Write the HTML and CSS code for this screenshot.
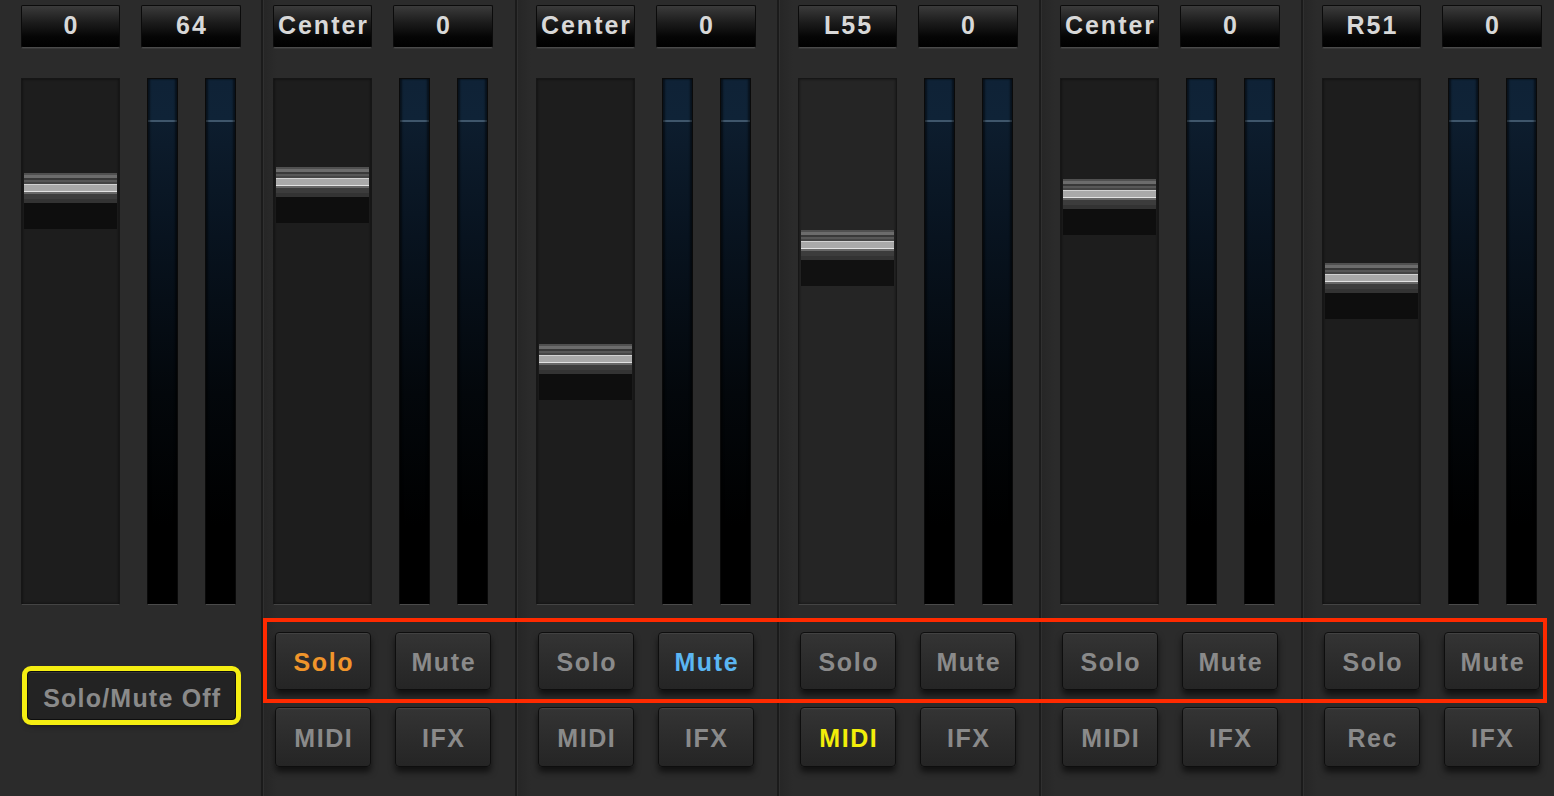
FILE: index.html
```html
<!DOCTYPE html>
<html>
<head>
<meta charset="utf-8">
<link rel="stylesheet" href="styles.css">
</head>
<body>
<div class="mixer">
  <div class="strip strip--master">
    <div class="grid values"><div class="val">0</div><div class="val">64</div></div>
    <div class="grid faders">
      <div class="track"><div class="cap" style="top:94px"></div></div>
      <div class="meters"><div class="meter"></div><div class="meter"></div></div>
    </div>
    <div class="master-bottom"><div class="btn btn--wide annot-yellow">Solo/Mute Off</div></div>
  </div>

  <div class="strip strip--second">
    <div class="grid values"><div class="val">Center</div><div class="val">0</div></div>
    <div class="grid faders">
      <div class="track"><div class="cap" style="top:88px"></div></div>
      <div class="meters"><div class="meter"></div><div class="meter"></div></div>
    </div>
    <div class="grid buttons">
      <div class="btn btn--solo-on">Solo</div><div class="btn">Mute</div>
      <div class="btn">MIDI</div><div class="btn">IFX</div>
    </div>
  </div>

  <div class="strip">
    <div class="grid values"><div class="val">Center</div><div class="val">0</div></div>
    <div class="grid faders">
      <div class="track"><div class="cap" style="top:265px"></div></div>
      <div class="meters"><div class="meter"></div><div class="meter"></div></div>
    </div>
    <div class="grid buttons">
      <div class="btn">Solo</div><div class="btn btn--mute-on">Mute</div>
      <div class="btn">MIDI</div><div class="btn">IFX</div>
    </div>
  </div>

  <div class="strip">
    <div class="grid values"><div class="val">L55</div><div class="val">0</div></div>
    <div class="grid faders">
      <div class="track track--selected"><div class="cap" style="top:151px"></div></div>
      <div class="meters"><div class="meter"></div><div class="meter"></div></div>
    </div>
    <div class="grid buttons">
      <div class="btn">Solo</div><div class="btn">Mute</div>
      <div class="btn btn--midi-on">MIDI</div><div class="btn">IFX</div>
    </div>
  </div>

  <div class="strip">
    <div class="grid values"><div class="val">Center</div><div class="val">0</div></div>
    <div class="grid faders">
      <div class="track"><div class="cap" style="top:100px"></div></div>
      <div class="meters"><div class="meter"></div><div class="meter"></div></div>
    </div>
    <div class="grid buttons">
      <div class="btn">Solo</div><div class="btn">Mute</div>
      <div class="btn">MIDI</div><div class="btn">IFX</div>
    </div>
  </div>

  <div class="strip strip--last">
    <div class="grid values"><div class="val">R51</div><div class="val">0</div></div>
    <div class="grid faders">
      <div class="track"><div class="cap" style="top:184px"></div></div>
      <div class="meters"><div class="meter"></div><div class="meter"></div></div>
    </div>
    <div class="grid buttons">
      <div class="btn">Solo</div><div class="btn">Mute</div>
      <div class="btn">Rec</div><div class="btn">IFX</div>
    </div>
  </div>

  <div class="annot-red"></div>
</div>
</body>
</html>
```

FILE: styles.css
```css
* { box-sizing: border-box; }
html, body {
  margin: 0;
  padding: 0;
  width: 1554px;
  height: 796px;
  overflow: hidden;
  background: #2a2a2a;
  font-family: "Liberation Sans", Arial, sans-serif;
}
.mixer {
  position: relative;
  display: flex;
  width: 1554px;
  height: 796px;
  background: #2a2a2a;
}
.strip {
  flex: none;
  width: 262px;
  height: 796px;
  padding-left: 19px;
  border-left: 2px solid #1b1b1b;
  box-shadow: inset 1px 0 0 #303030;
  background: linear-gradient(to right, #262626 0, #2b2b2b 14px, #2b2b2b 100%);
  display: flex;
  flex-direction: column;
}
.strip--master {
  width: 261px;
  padding-left: 21px;
  border-left: none;
  box-shadow: none;
  background: #2b2b2b;
}
.strip--second {
  width: 254px;
  padding-left: 10px;
}
.strip--last {
  flex: 1;
}
.grid {
  display: grid;
  grid-template-columns: 100px 100px;
  column-gap: 20px;
}
.values {
  margin-top: 5px;
  height: 43px;
}
.val {
  height: 43px;
  border: 1px solid #0b0b0b;
  border-bottom-color: #4a4a4a;
  border-radius: 2px;
  background: linear-gradient(to bottom, #3b3b3b 0%, #1c1c1c 40%, #050505 75%, #000 100%);
  box-shadow: 0 1px 0 rgba(255,255,255,0.06);
  color: #d8d8d8;
  font-weight: bold;
  font-size: 25px;
  letter-spacing: 2px;
  text-indent: 2px;
  display: flex;
  align-items: center;
  justify-content: center;
  padding-bottom: 3px;
}
.values .val:first-child { margin-right: 1px; }
.faders {
  margin-top: 30px;
  height: 527px;
}
.track {
  position: relative;
  width: 99px;
  height: 527px;
  background: #1d1d1d;
  border: 1px solid #161616;
  border-bottom-color: #444;
  box-shadow: inset 0 0 3px rgba(0,0,0,0.6);
}
.track--selected {
  background: #252525;
}
.cap {
  position: absolute;
  left: 2px;
  right: 2px;
  height: 30px;
  background: linear-gradient(to bottom,
    #505050 0, #505050 2px,
    #6c6c6c 2px, #6c6c6c 5px,
    #393939 5px, #393939 7px,
    #575757 7px, #575757 9px,
    #454545 9px, #454545 11px,
    #d2d2d2 11px, #d2d2d2 12px,
    #a9a9a9 12px, #a9a9a9 18px,
    #e2e2e2 18px, #e2e2e2 19px,
    #686868 19px, #686868 21px,
    #3c3c3c 21px, #3c3c3c 26px,
    #333 26px, #333 30px);
}
.cap::after {
  content: "";
  position: absolute;
  left: 0;
  right: 0;
  top: 30px;
  height: 26px;
  background: rgba(8,8,8,0.7);
}
.meters {
  display: flex;
  justify-content: space-between;
  padding: 0 5px 0 6px;
}
.meter {
  width: 31px;
  height: 527px;
  border: 1px solid #0a0a0a;
  border-bottom-color: #4a4a4a;
  background: linear-gradient(to bottom,
    #0f2236 0, #0f2337 41px,
    #3f566b 41px, #3f566b 43px,
    #0d1d2e 43px, #08131f 30%, #03070b 60%, #000 85%, #000 100%);
  box-shadow: inset 2px 0 2px rgba(0,0,0,0.5), inset -2px 0 2px rgba(0,0,0,0.5);
}
.buttons {
  margin-top: 27px;
  row-gap: 17px;
  grid-template-rows: 58px 60px;
  justify-items: center;
}
.btn {
  width: 96px;
  height: 100%;
  border: 1px solid #0e0e0e;
  border-radius: 4px;
  background: linear-gradient(to bottom, #343434 0%, #2c2c2c 50%, #252525 100%);
  box-shadow: inset 0 1px 0 rgba(255,255,255,0.07), 0 5px 6px rgba(0,0,0,0.6);
  color: #8a8a8a;
  font-weight: bold;
  font-size: 25px;
  letter-spacing: 1.6px;
  text-indent: 1.6px;
  display: flex;
  align-items: center;
  justify-content: center;
  padding-top: 3px;
}
.btn--solo-on { color: #f0952b; }
.btn--mute-on { color: #5bb6f2; }
.btn--midi-on { color: #f2ee0a; }
.master-bottom {
  margin-top: 66px;
  padding-left: 6px;
}
.btn--wide {
  width: 209px;
  height: 49px;
  letter-spacing: 1.2px;
  font-size: 25px;
  background: #232323;
  padding-top: 5px;
}
.annot-yellow {
  outline: 5px solid #f5ee12;
  outline-offset: 0;
}
.annot-red {
  position: absolute;
  left: 263px;
  top: 618px;
  width: 1284px;
  height: 85px;
  border: 4px solid #ff2a00;
  pointer-events: none;
}
```
